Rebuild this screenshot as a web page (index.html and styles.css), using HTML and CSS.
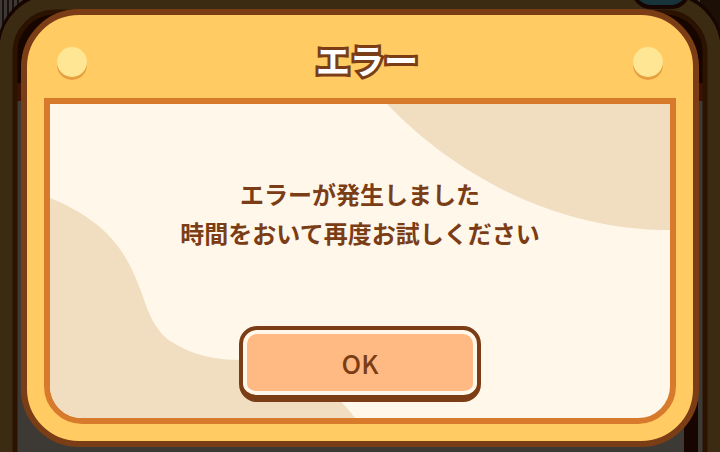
FILE: index.html
```html
<!DOCTYPE html>
<html lang="ja">

<head>
    <meta charset="UTF-8">
    <meta name="viewport" content="width=device-width, initial-scale=1.0">
    <title>エラー</title>
    <link rel="stylesheet" href="styles.css">
</head>

<body>
    <!-- dimmed game screen -->
    <svg class="backdrop" viewBox="0 0 720 452" preserveAspectRatio="none" aria-hidden="true">
        <rect width="720" height="452" fill="#3d3a35" />
        <path d="M3 0v30M8 0v24M13 0v18M18 0v12" stroke="#1c100d" stroke-width="2" />
        <rect x="700" width="20" height="30" fill="#1c0f05" />
        <path d="M15 83V52A40 40 0 0 1 55 12H665A40 40 0 0 1 705 52V83Z" fill="#170500" />
        <rect x="15" y="83" width="690" height="18" fill="#3c1204" />
        <rect x="684" y="400" width="14" height="52" fill="#170500" />
        <rect x="7" y="0" width="706" height="520" rx="48" fill="none" stroke="#160500" stroke-width="19" />
        <rect x="7" y="3" width="706" height="520" rx="46" fill="none" stroke="#3a2b12" stroke-width="15" />
        <rect x="15" y="12" width="690" height="520" rx="40" fill="none" stroke="#2c1200" stroke-width="5" />
        <rect x="633" y="-30" width="56" height="37" rx="18" fill="#17343a" stroke="#160500" stroke-width="4" />
    </svg>

    <div class="overlay">
        <div class="modal" role="alertdialog" aria-labelledby="title" aria-describedby="message">
            <div class="modal-header">
                <span class="rivet"></span>
                <h1 class="title" id="title">エラー</h1>
                <span class="rivet"></span>
            </div>

            <div class="modal-body">
                <svg class="pattern" viewBox="0 0 620 314" preserveAspectRatio="none" aria-hidden="true">
                    <path d="M337 0C400 66 500 126 620 126V0Z" />
                    <path d="M0 94C26 104 48 119 62 135C76 151 84 168 92 190C100 214 106 226 120 237C142 251 165 256 190 256C250 262 280 280 305 314H0Z" />
                </svg>
                <p class="message" id="message">エラーが発生しました<br>時間をおいて再度お試しください</p>
                <button class="ok-btn" type="button">OK</button>
            </div>
        </div>
    </div>
</body>

</html>
```
FILE: styles.css
```css
* {
    margin: 0;
    padding: 0;
    box-sizing: border-box;
}

body {
    min-height: 100vh;
    background-color: #3d3a35;
    color: #7b3d16;
    font-family: "Noto Sans CJK JP", sans-serif;
}

.backdrop {
    position: fixed;
    inset: 0;
    width: 100%;
    height: 100%;
}

.overlay {
    min-height: 100vh;
    display: flex;
    padding: 9px 21px 5px;
    position: relative;
}

.modal {
    flex: 1;
    display: flex;
    flex-direction: column;
    padding: 0 17px 17px;
    border: 6px solid #7b3d16;
    border-radius: 58px;
    background-color: #ffcb62;
}

.modal-header {
    height: 83px;
    display: flex;
    align-items: center;
    justify-content: space-between;
    padding: 10px 13px 0;
}

.rivet {
    width: 30px;
    height: 30px;
    border-radius: 50%;
    background-color: #ffe694;
    box-shadow: 0 3px 0 #e69f41;
}

.title {
    padding: 0 0 4px 14px;
    color: #fff;
    font-size: 34px;
    line-height: 38px;
    font-weight: 700;
    -webkit-text-stroke: 6px #7b3d16;
    paint-order: stroke fill;
    stroke-linejoin: round;
}

.modal-body {
    flex: 1;
    display: flex;
    flex-direction: column;
    align-items: center;
    justify-content: space-between;
    padding: 70px 16px 16px;
    border: 6px solid #d77a2b;
    border-radius: 0 0 38px 38px;
    background-color: #fff7ea;
    position: relative;
    overflow: hidden;
}

.pattern {
    position: absolute;
    inset: 0;
    width: 100%;
    height: 100%;
    fill: #f1dec0;
}

.message {
    position: relative;
    font-size: 24px;
    line-height: 39px;
    font-weight: 700;
    text-align: center;
}

.ok-btn {
    width: 242px;
    height: 76px;
    position: relative;
    border: solid #7b3d16;
    border-width: 4px 4px 7px;
    border-radius: 18px;
    background-color: #ffb982;
    box-shadow: inset 0 0 0 4px #fff7ea;
    color: #7b3d16;
    font-family: inherit;
    font-size: 26px;
    font-weight: 500;
    cursor: pointer;
}

.ok-btn:active {
    background-color: #f5a96e;
}
```
